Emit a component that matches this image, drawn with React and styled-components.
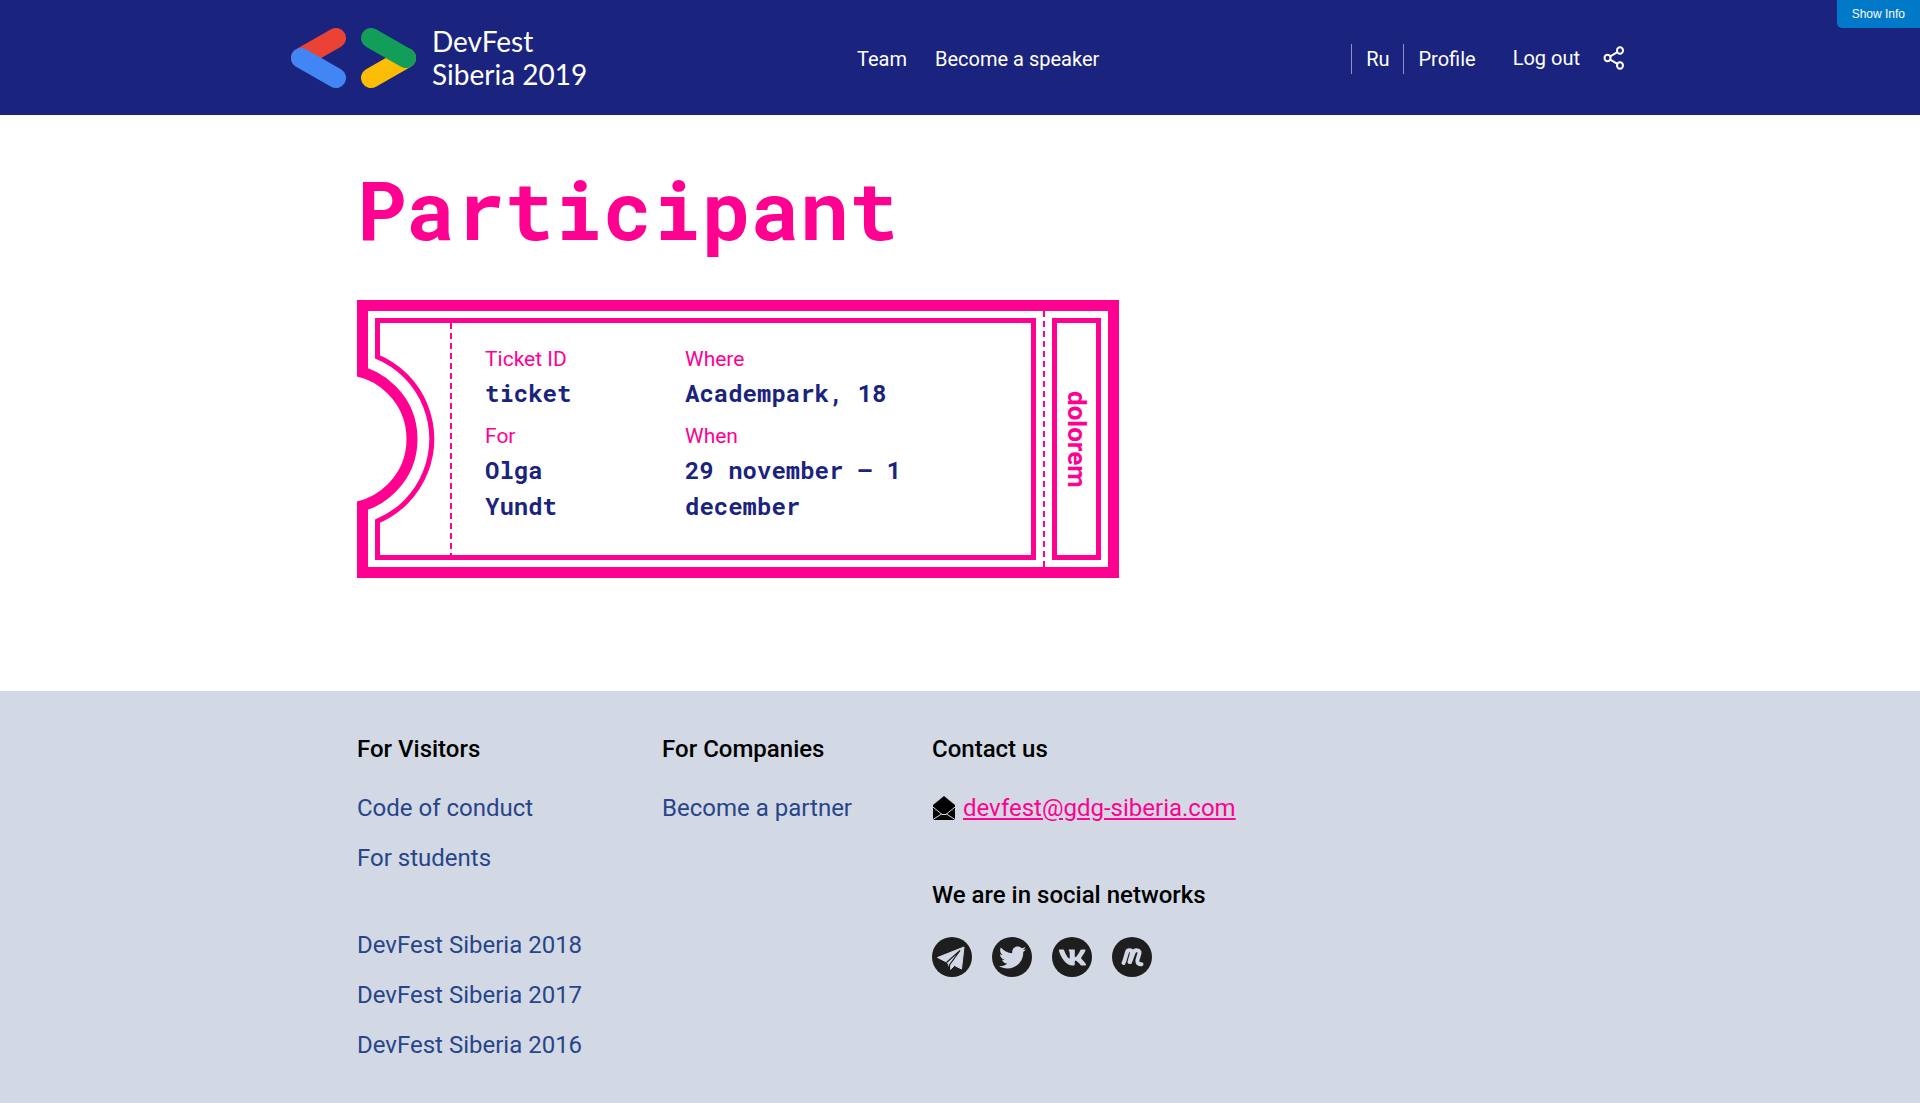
import React from "react";
import styled, { createGlobalStyle, css } from "styled-components";
import { FaTwitter, FaVk } from "react-icons/fa";

const color = {
  navy: "#1a237e",
  pink: "#ff0090",
  white: "#ffffff",
  footer: "#d2d9e5",
  link: "#284589",
  info: "#0079c9",
  dark: "#1e1e1e",
};

const mono = '"Roboto Mono", "DejaVu Sans Mono", monospace';

const GlobalStyle = createGlobalStyle`
  *, *::before, *::after { box-sizing: border-box; }
  body {
    margin: 0;
    background: ${color.white};
    color: #000;
    font-family: Roboto, "Liberation Sans", sans-serif;
  }
  h1, h2, p, ul, dl, dd { margin: 0; padding: 0; }
  ul { list-style: none; }
  a { color: inherit; text-decoration: none; }
  button {
    border: 0;
    padding: 0;
    background: none;
    color: inherit;
    font: inherit;
    cursor: pointer;
  }
`;

const Page = styled.div`
  display: flex;
  flex-direction: column;
  min-height: 100vh;
`;

const Header = styled.header`
  background: ${color.navy};
  color: ${color.white};
`;

const HeaderInner = styled.div`
  display: flex;
  align-items: center;
  justify-content: space-between;
  max-width: 1340px;
  min-height: 115px;
  margin: 0 auto;
`;

const Logo = styled.a`
  display: flex;
  align-items: center;
  gap: 16px;
`;

const LogoText = styled.span`
  font-family: Lato, sans-serif;
  font-size: 28px;
  line-height: 33px;
`;

const Nav = styled.nav`
  display: flex;
  gap: 28px;
  margin-left: 18px;
  padding-top: 2px;
  font-size: 20px;
  line-height: 24px;
`;

const Actions = styled.div`
  display: flex;
  align-items: center;
  font-size: 20px;
  line-height: 24px;
`;

const Languages = styled.div`
  display: flex;
  padding-top: 2px;
`;

const Divided = styled.a`
  display: flex;
  align-items: center;
  height: 30px;
  padding: 0 14px;
  border-left: 1px solid #8c91bf;
`;

const LogoutButton = styled.button`
  margin-left: 23px;
`;

const ShareButton = styled.button`
  display: flex;
  margin-left: 18px;
  padding: 0 5px;
`;

const InfoButton = styled.button`
  position: absolute;
  top: 0;
  right: 0;
  height: 28px;
  padding: 0 15px;
  border-bottom-left-radius: 5px;
  background: ${color.info};
  color: ${color.white};
  font-family: "Liberation Sans", sans-serif;
  font-size: 12px;
`;

const Main = styled.main`
  width: 100%;
  max-width: 1206px;
  margin: 0 auto;
  padding: 39px 0 113px;
`;

const Title = styled.h1`
  margin-bottom: 38px;
  color: ${color.pink};
  font-family: ${mono};
  font-size: 82px;
  line-height: 108px;
`;

const Ticket = styled.article`
  position: relative;
  display: flex;
  max-width: 762px;
  min-height: 278px;
  border: 11px solid ${color.pink};
`;

const Notch = styled.svg`
  position: absolute;
  top: -11px;
  left: -11px;
`;

const perforation = css`
  background-image: repeating-linear-gradient(
    ${color.pink} 0 6px,
    transparent 6px 10px
  );
  background-repeat: no-repeat;
  background-size: 2px 100%;
`;

const TicketBody = styled.div`
  flex: 1;
  margin: 7px;
  padding: 20px 33px 18px 105px;
  border: 5px solid ${color.pink};
  ${perforation}
  background-position: 70px 0;
`;

const Details = styled.dl`
  display: grid;
  grid-template-columns: 140px 1fr;
  column-gap: 60px;
  row-gap: 9px;
`;

const Label = styled.dt`
  color: ${color.pink};
  font-size: 21px;
  line-height: 32px;
`;

const Value = styled.dd`
  color: ${color.navy};
  font-family: ${mono};
  font-size: 24px;
  font-weight: 700;
  line-height: 36px;
`;

const Stub = styled.div`
  display: flex;
  padding: 7px 7px 7px 9px;
  ${perforation}
`;

const StubLabel = styled.p`
  width: 49px;
  border: 5px solid ${color.pink};
  color: ${color.pink};
  font-size: 26px;
  font-weight: 700;
  line-height: 39px;
  text-align: center;
  writing-mode: vertical-rl;
`;

const Footer = styled.footer`
  flex: 1;
  padding: 41px 0 28px;
  background: ${color.footer};
`;

const FooterInner = styled.div`
  display: flex;
  gap: 80px;
  max-width: 1206px;
  margin: 0 auto;
  font-size: 24px;
  line-height: 34px;
`;

const FooterHeading = styled.h2`
  margin-bottom: 25px;
  font-size: 24px;
  font-weight: 500;
  line-height: 34px;
`;

const LinkList = styled.ul`
  display: flex;
  flex-direction: column;
  gap: 16px;
  color: ${color.link};

  & + & {
    margin-top: 53px;
  }
`;

const Email = styled.p`
  display: flex;
  align-items: center;
  gap: 7px;
  margin-bottom: 53px;

  a {
    color: ${color.pink};
    text-decoration: underline;
  }
`;

const SocialList = styled.ul`
  display: flex;
  gap: 20px;
`;

const SocialLink = styled.a`
  display: flex;
  align-items: center;
  justify-content: center;
  width: 40px;
  height: 40px;
  border-radius: 50%;
  background: ${color.dark};
  color: ${color.footer};
`;

const details = [
  { label: "Ticket ID", value: "ticket" },
  { label: "Where", value: "Academpark, 18" },
  { label: "For", value: "Olga Yundt" },
  { label: "When", value: "29 november – 1 december" },
];

const visitorLinks = [
  ["Code of conduct", "For students"],
  ["DevFest Siberia 2018", "DevFest Siberia 2017", "DevFest Siberia 2016"],
];

function TelegramIcon({ size }) {
  return (
    <svg width={size} height={size} viewBox="0 0 40 40" aria-hidden="true">
      <path
        d="M5.500 20.500 32 10l-2.500 22-7-3.500-4 4-3-7Z"
        fill="currentColor"
        stroke="currentColor"
        strokeLinejoin="round"
      />
      <path d="m14.500 25.500 13.500-12-10.500 14.500v5" fill="none" stroke={color.dark} strokeWidth="1.2" />
    </svg>
  );
}

function MeetupIcon({ size }) {
  return (
    <svg
      width={size}
      height={size}
      viewBox="0 0 40 40"
      fill="none"
      stroke="currentColor"
      strokeWidth="4"
      strokeLinecap="round"
      strokeLinejoin="round"
      aria-hidden="true"
    >
      <path d="M11.500 26c2-4 2.500-9 4-12 1-1 3-1 4 0 1 2-1 7-2 11" />
      <path d="M18 25c2-4 2.500-8 4.500-11 1-1 4.500-1 5 1 .5 3-3 7-2 10 .5 2 2 2.300 4 2.200" />
    </svg>
  );
}

const socials = [
  { name: "Telegram", Icon: TelegramIcon, size: 40 },
  { name: "Twitter", Icon: FaTwitter, size: 27 },
  { name: "VK", Icon: FaVk, size: 29 },
  { name: "Meetup", Icon: MeetupIcon, size: 40 },
];

function LogoMark() {
  return (
    <svg width="126" height="62" viewBox="0 0 126 62" fill="none" strokeWidth="20" strokeLinecap="round" aria-hidden="true">
      <path d="M46 11 11 31" stroke="#ea4335" />
      <path d="M11 31 46 51" stroke="#4285f4" />
      <path d="M81 51 116 31" stroke="#fbbc04" />
      <path d="M81 11 116 31" stroke="#129d58" />
    </svg>
  );
}

function ShareIcon() {
  return (
    <svg width="22" height="24" viewBox="0 0 22 24" fill="none" stroke="currentColor" strokeWidth="2" aria-hidden="true">
      <ellipse cx="4.5" cy="12" rx="3" ry="3.2" />
      <ellipse cx="17" cy="4.5" rx="3" ry="3.2" />
      <ellipse cx="17" cy="19.5" rx="3" ry="3.2" />
      <path d="m7.2 10.4 7.2-4.3M7.2 13.6l7.2 4.3" />
    </svg>
  );
}

function EnvelopeIcon() {
  return (
    <svg width="24" height="24" viewBox="0 0 24 24" aria-hidden="true">
      <path d="M1 9 12 0l11 9v15H1Z" fill="#000" />
      <path d="m1 11 9 7.500h4L23 11M1 23.500l8.500-5.500M23 23.500 14.500 18" fill="none" stroke={color.footer} />
    </svg>
  );
}

function TicketNotch() {
  return (
    <Notch width="80" height="278" viewBox="0 0 80 278" fill={color.white} stroke={color.pink} aria-hidden="true">
      <clipPath id="notch-inner">
        <path d="M18 0h62v278H18z" />
      </clipPath>
      <circle cx="-14.5" cy="139" r="89.3" strokeWidth="5" clipPath="url(#notch-inner)" />
      <circle cx="-14.5" cy="139" r="69.5" strokeWidth="11" />
    </Notch>
  );
}

function FooterLinks({ items }) {
  return (
    <LinkList>
      {items.map((item) => (
        <li key={item}>
          <a href="#">{item}</a>
        </li>
      ))}
    </LinkList>
  );
}

export default function App() {
  return (
    <Page>
      <GlobalStyle />
      <Header>
        <HeaderInner>
          <Logo href="#">
            <LogoMark />
            <LogoText>
              DevFest
              <br />
              Siberia 2019
            </LogoText>
          </Logo>
          <Nav>
            <a href="#">Team</a>
            <a href="#">Become a speaker</a>
          </Nav>
          <Actions>
            <Languages>
              <Divided href="#">Ru</Divided>
              <Divided href="#">Profile</Divided>
            </Languages>
            <LogoutButton type="button">Log out</LogoutButton>
            <ShareButton type="button" aria-label="Share">
              <ShareIcon />
            </ShareButton>
          </Actions>
        </HeaderInner>
        <InfoButton type="button">Show Info</InfoButton>
      </Header>

      <Main>
        <Title>Participant</Title>
        <Ticket>
          <TicketBody>
            <Details>
              {details.map(({ label, value }) => (
                <div key={label}>
                  <Label>{label}</Label>
                  <Value>{value}</Value>
                </div>
              ))}
            </Details>
          </TicketBody>
          <Stub>
            <StubLabel>dolorem</StubLabel>
          </Stub>
          <TicketNotch />
        </Ticket>
      </Main>

      <Footer>
        <FooterInner>
          <section>
            <FooterHeading>For Visitors</FooterHeading>
            {visitorLinks.map((items) => (
              <FooterLinks key={items[0]} items={items} />
            ))}
          </section>
          <section>
            <FooterHeading>For Companies</FooterHeading>
            <FooterLinks items={["Become a partner"]} />
          </section>
          <section>
            <FooterHeading>Contact us</FooterHeading>
            <Email>
              <EnvelopeIcon />
              <a href="mailto:devfest@gdg-siberia.com">devfest@gdg-siberia.com</a>
            </Email>
            <FooterHeading>We are in social networks</FooterHeading>
            <SocialList>
              {socials.map(({ name, Icon, size }) => (
                <li key={name}>
                  <SocialLink href="#" aria-label={name}>
                    <Icon size={size} />
                  </SocialLink>
                </li>
              ))}
            </SocialList>
          </section>
        </FooterInner>
      </Footer>
    </Page>
  );
}
